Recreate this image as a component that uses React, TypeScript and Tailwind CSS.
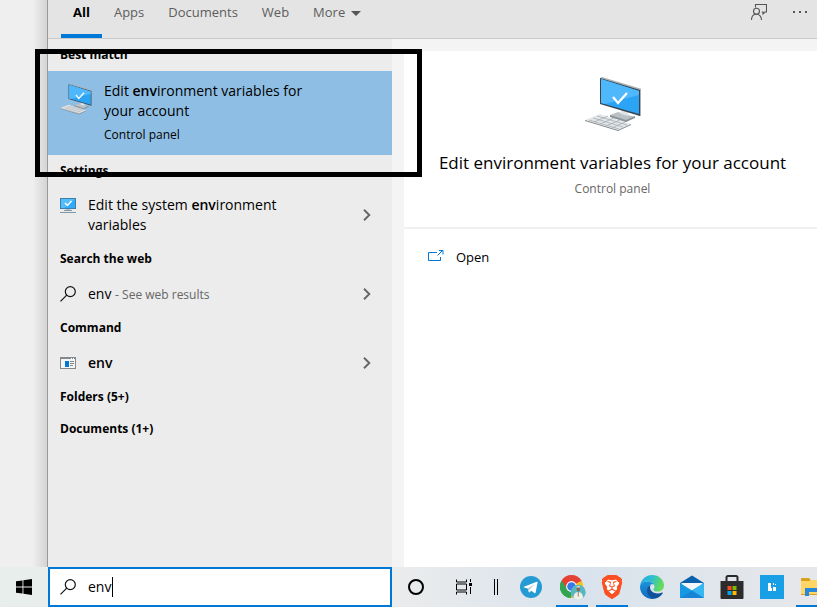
import type { ReactNode } from "react";
import { SiBrave } from "react-icons/si";

function MonitorArt({ className }: { className: string }) {
  return (
    <svg className={className} viewBox="0 0 56 54" aria-hidden="true">
      <path d="M25 38l8-3 17 5-9 5-16-5z" fill="#b9c1c6" />
      <path d="M25 38v2l16 5 9-4v-2l-9 4z" fill="#8a9399" />
      <path d="M36 33l7 2v4l-7-2z" fill="#dfe3e6" />
      <path d="M15 1l2-1 40 12-1 27-2 0z" fill="#aab2b7" />
      <path d="M15 1l40 12v26L15 27z" fill="#36454f" />
      <path d="M16 2l38 12v23L16 26z" fill="#2ba4f5" />
      <path d="M16 2l38 12v4L20 27l-4-1z" fill="#4fb7fb" />
      <path d="M28 20l5 6 9-10" fill="none" stroke="#fff" strokeWidth="2.200" />
      <path d="M0 43l15-6 31 10-13 6z" fill="#e4e7e9" />
      <path d="M0 43v1l33 10 13-6v-1l-13 6z" fill="#81898f" />
      <path d="M4 43l30 9M8 41l30 9M12 39l30 9M9 45l14-6M15 47l14-6M21 49l14-6M27 51l13-6" fill="none" stroke="#a6adb2" strokeWidth="0.800" />
    </svg>
  );
}

function SearchIcon() {
  return (
    <svg className="size-4 shrink-0" viewBox="0 0 16 16" fill="none" stroke="#111" strokeWidth="1.2" aria-hidden="true">
      <circle cx="10.3" cy="5.6" r="5" />
      <path d="M6.7 9.2L.5 15.4" />
    </svg>
  );
}

function SystemIcon() {
  return (
    <svg className="size-4 shrink-0" viewBox="0 0 16 16" aria-hidden="true">
      <path d="M0 0h16v11H0z" fill="#3c7fae" />
      <path d="M1 1h14v9H1z" fill="#2fabf7" />
      <path d="M1 1h14L4 10H1z" fill="#56bdfb" />
      <path d="M5 5l2.500 2.500L11.500 3" fill="none" stroke="#fff" strokeWidth="1.400" />
      <path d="M6 11h4v1H6z" fill="#b5bfc6" />
      <path d="M4 12h8v1H4zM0 14h16v1H0z" fill="#7e98a9" />
    </svg>
  );
}

function CommandIcon() {
  return (
    <svg className="h-3 w-4 shrink-0" viewBox="0 0 16 12" aria-hidden="true">
      <path d="M0 0h16v12H0z" fill="#85898c" />
      <path d="M1 2h14v9H1z" fill="#f3f5f6" />
      <path d="M5 4h4v6H5z" fill="#0078d7" />
      <path d="M10 4h4v1h-4zM10 6h4v1h-4zM10 8h3v1h-3z" fill="#85898c" />
      <path d="M11 1h1v1h-1zM13 1h1v1h-1z" fill="#fff" />
    </svg>
  );
}

function Chevron() {
  return (
    <svg className="h-3 w-2 shrink-0" viewBox="0 0 8 12" fill="none" stroke="#666" strokeWidth="1.900" aria-hidden="true">
      <path d="M1 .8L6.300 6 1 11.200" />
    </svg>
  );
}

function FeedbackIcon() {
  return (
    <svg className="size-4" viewBox="0 0 16 16" fill="none" stroke="#555" strokeWidth="1.100" aria-hidden="true">
      <path d="M4.500 3.500v-3h11v7.500h-1.500l-2 2v-2h-1.200" />
      <circle cx="5.500" cy="7.300" r="3" />
      <path d="M.5 16c0-3.500 2-5.700 5-5.700s5 2.200 5 5.700" />
    </svg>
  );
}

function WindowsIcon() {
  return (
    <svg className="size-4" viewBox="0 0 16 16" aria-hidden="true">
      <path d="M0 2.300L6.500 1.400v6.200H0zM7.400 1.300L16 0v7.600H7.400zM0 8.400h6.500v6.200L0 13.700zM7.400 8.400H16V16l-8.600-1.300z" />
    </svg>
  );
}

function TaskViewIcon() {
  return (
    <svg className="size-4" viewBox="0 0 16 16" aria-hidden="true">
      <path d="M.5 .5v2.500h10V.5M.5 15.500V13h10v2.500M.5 5h10v6H.5z" fill="none" stroke="#000" />
      <path d="M14 0h1v3h-1zM14 8h1v7h-1zM13 4h3v3h-3z" />
    </svg>
  );
}

function TelegramIcon() {
  return (
    <svg className="mr-[2px] size-[22px]" viewBox="0 0 22 22" aria-hidden="true">
      <circle cx="11" cy="11" r="11" fill="#269bd3" />
      <path d="M4 10.800L16.700 5.700c.6-.2 1 .2.9.8l-2 10c-.1.700-.600.900-1.200.500l-3.200-2.300-1.600 1.500c-.4.400-.8.200-.9-.200l-.9-3.500-3.700-1.100c-.6-.2-.6-.4-.1-.6z" fill="#fff" />
      <path d="M7.800 12.500l7.400-4.800-5.800 5.700-.3 2.800z" fill="#a9c9dd" />
    </svg>
  );
}

function ChromeIcon() {
  return (
    <svg className="ml-[2px] h-[26px] w-[26px]" viewBox="0 0 26 26" aria-hidden="true">
      <path d="M11.500 12.500L1.500 6.700A11.500 11.500 0 0 1 21.500 6.700z" fill="#e34133" />
      <path d="M11.500 12.500V24A11.500 11.500 0 0 1 1.500 6.700z" fill="#33a452" />
      <path d="M11.500 12.500l10-5.800A11.500 11.500 0 0 1 11.500 24z" fill="#fbc116" />
      <path d="M11.500 7.300h10.300l-.3-.6H1.500l5.500 8.400z" fill="#e34133" />
      <path d="M1.500 6.700l5.400 8.500 4.600 2.300L9 23.800A11.500 11.500 0 0 1 1.500 6.700z" fill="#33a452" />
      <circle cx="11.500" cy="12.500" r="5.400" fill="#fff" />
      <circle cx="11.500" cy="12.500" r="4.300" fill="#3978e8" />
      <circle cx="18.200" cy="18.200" r="7.500" fill="#56b7c2" />
      <path d="M13.500 24c0-4 2-6 4.700-6s4.800 2 4.800 6a7.500 7.500 0 0 1-9.500 0z" fill="#f0eee6" />
      <path d="M17.800 18h1v4l-.5 1-.5-1z" fill="#9a7b61" />
      <ellipse cx="18.300" cy="15" rx="1.700" ry="2.400" fill="#8c6550" />
      <path d="M16.500 13.500c.5-2 3.200-2 3.700 0z" fill="#e7e3da" />
    </svg>
  );
}

function BraveIcon() {
  return (
    <svg className="h-6 w-6" viewBox="0 0 24 24" aria-hidden="true">
      <path d="M2.800 3.500L7 .3h10l4.200 3.200.6 3.500L19 18.500 12 23.700 5 18.500 2.200 7z" fill="#fb5023" />
      <path d="M8 4.500l4 .8 4-.8 3.300 3.500-1.300 3.500.3 2.500-3.300 3-3 2.800-3-2.800-3.300-3 .3-2.500L4.700 8z" fill="#fff" />
      <SiBrave size={24} color="#fb5023" />
    </svg>
  );
}

function EdgeIcon() {
  return (
    <svg className="size-6" viewBox="0 0 24 24" aria-hidden="true">
      <defs>
        <linearGradient id="edge-top" x1="0" y1="0" x2="1" y2="0.3">
          <stop offset="0" stopColor="#2aa7e6" />
          <stop offset="0.5" stopColor="#2dbfd0" />
          <stop offset="1" stopColor="#66dc59" />
        </linearGradient>
        <linearGradient id="edge-side" x1="0" y1="0" x2="0" y2="1">
          <stop offset="0" stopColor="#1b92dd" />
          <stop offset="1" stopColor="#116bbd" />
        </linearGradient>
      </defs>
      <path d="M.2 10.500C1 4.200 6 0 12 0c7 0 12 5 12 10.300 0 4-3 6.300-6.300 6.300-3 0-4.400-1-4.400-1.800 0-.7 1.200-1.200 1.200-3 0-2.300-2.600-5.300-6.900-5.300C4 6.500 1.500 8.300.2 10.500z" fill="url(#edge-top)" />
      <path d="M.2 10.500C1.300 8 4.100 6.500 7.600 6.500c3 0 5.200 1.400 6.200 3-2.800-.8-6.300 1.300-6.300 5.300 0 4.500 3.700 8.500 8 8.600C13.200 24.400 10.300 24 9 23.600 3.500 22 0 17.200 0 12z" fill="url(#edge-side)" />
      <path d="M11.500 9.400c-3.400 1-4.700 3.800-4.500 6.500.4 4.300 4 7.900 8.500 7.500 3.400-.7 5.700-2.900 7.200-5.200.3-.6-.2-.9-.7-.7-5.500 2.400-12-.1-12-5.500 0-1 .6-2.100 1.500-2.600z" fill="#10529b" />
    </svg>
  );
}

function MailIcon() {
  return (
    <svg className="size-6" viewBox="0 0 24 24" aria-hidden="true">
      <path d="M0 8L12 .5 24 8v6H0z" fill="#0961ac" />
      <path d="M1.500 8h21v7h-21z" fill="#f3f7fa" />
      <path d="M0 8l12 7.500L24 8v15H0z" fill="#1599e3" />
      <path d="M0 23l15-9 9 9z" fill="#1784d5" />
      <path d="M0 8l24 15V8l-12 7.500z" fill="#35b7f1" />
    </svg>
  );
}

function StoreIcon() {
  return (
    <svg className="size-6" viewBox="0 0 24 24" aria-hidden="true">
      <path d="M6.500 7V2.500C6.500 1.500 7 1 8 1h8c1 0 1.500.5 1.500 1.500V7" fill="none" stroke="#292929" strokeWidth="2" />
      <path d="M.5 6h23v17c0 .6-.4 1-1 1h-21c-.6 0-1-.4-1-1z" fill="#2c2c2c" />
      <path d="M7.500 11h4v4h-4z" fill="#f25022" />
      <path d="M12.500 11h4v4h-4z" fill="#7fba00" />
      <path d="M7.500 16h4v4h-4z" fill="#00a4ef" />
      <path d="M12.500 16h4v4h-4z" fill="#ffb900" />
    </svg>
  );
}

function LauncherIcon() {
  return (
    <svg className="size-6" viewBox="0 0 24 24" aria-hidden="true">
      <path d="M0 0h24v24H0z" fill="#199fe6" />
      <path d="M8 8h3v5h1v3H8zM13 12h3v4h-3zM13 8h1v2h-1zM15 9h1v1h-1z" fill="#fff" />
    </svg>
  );
}

function FolderIcon() {
  return (
    <svg className="ml-[2px] h-6 w-6 shrink-0" viewBox="0 0 24 24" aria-hidden="true">
      <path d="M0 4c0-.6.400-1 1-1h7l2 2.500h13c.6 0 1 .400 1 1V20H0z" fill="#d9a11e" />
      <path d="M0 6h8l2-1h13c.6 0 1 .400 1 1v13H0z" fill="#ffd666" />
      <path d="M4 13h16v8h-4v-4H8v4H4z" fill="#2688dc" />
    </svg>
  );
}

function TabButton({ children, active = false }: { children: ReactNode; active?: boolean }) {
  return (
    <button
      className={
        active
          ? "flex h-full items-center border-b-4 border-[#0078d7] px-3 pb-2 font-bold text-black"
          : "flex h-full items-center gap-[6px] px-3 pb-3 text-[#5d5d5d]"
      }
    >
      {children}
    </button>
  );
}

function GroupHeading({ children }: { children: ReactNode }) {
  return <h2 className="flex h-8 items-center px-3 text-xs font-bold">{children}</h2>;
}

function ResultRow({ icon, tall = false, children }: { icon: ReactNode; tall?: boolean; children: ReactNode }) {
  return (
    <button className={tall ? "flex h-14 w-full items-center px-3 text-left" : "flex h-[37px] w-full items-center px-3 text-left"}>
      <span className={tall ? "mr-3 self-start pt-[11px]" : "mr-3"}>{icon}</span>
      <span className="w-[210px] text-sm leading-5">{children}</span>
      <span className="mr-[9px] ml-auto">
        <Chevron />
      </span>
    </button>
  );
}

function TaskButton({ label, running = false, children }: { label: string; running?: boolean; children: ReactNode }) {
  return (
    <button aria-label={label} className="flex w-10 shrink-0 flex-col items-center">
      <span className="flex h-[38px] items-center pt-[2px]">{children}</span>
      <span className={running ? "h-[2px] w-8 bg-[#0078d7]" : "h-[2px] w-8"} />
    </button>
  );
}

export default function App() {
  return (
    <div className="relative flex min-h-screen flex-col overflow-hidden bg-[#eee] font-['Open_Sans','Noto_Sans',sans-serif] text-black">
      <div className="flex grow">
        <div className="w-12 shrink-0 border-r border-[#999] bg-linear-to-r from-[#efefef] from-70% to-[#d4d4d4]" />
        <main className="flex min-w-0 grow flex-col bg-[#f4f4f4]">
          <header className="flex h-[39px] justify-between border-b border-[#cacaca] bg-[#e4e4e4]">
            <nav className="flex pl-[13px] text-[13px]">
              <TabButton active>All</TabButton>
              <TabButton>Apps</TabButton>
              <TabButton>Documents</TabButton>
              <TabButton>Web</TabButton>
              <TabButton>
                More
                <svg className="h-[5px] w-[10px]" viewBox="0 0 10 5" fill="#555" aria-hidden="true">
                  <path d="M0 0h10L5 5z" />
                </svg>
              </TabButton>
            </nav>
            <div className="flex items-center gap-[26px] pr-[10px] pb-[14px]">
              <button aria-label="Feedback">
                <FeedbackIcon />
              </button>
              <button aria-label="Options" className="flex gap-1">
                <span className="size-[2px] bg-[#555]" />
                <span className="size-[2px] bg-[#555]" />
                <span className="size-[2px] bg-[#555]" />
              </button>
            </div>
          </header>
          <div className="flex grow">
            <section className="w-[344px] shrink-0 bg-[#ececec]">
              <GroupHeading>Best match</GroupHeading>
              <button className="flex h-[84px] w-full bg-[#8fbee4] px-3 pt-[10px] text-left">
                <MonitorArt className="mt-[2px] mr-3 h-8 w-8 shrink-0" />
                <span className="flex w-[210px] flex-col">
                  <span className="text-sm leading-5">
                    Edit <b className="font-semibold">env</b>ironment variables for your account
                  </span>
                  <span className="mt-1 text-xs leading-5">Control panel</span>
                </span>
              </button>
              <GroupHeading>Settings</GroupHeading>
              <ResultRow icon={<SystemIcon />} tall>
                Edit the system <b className="font-semibold">env</b>ironment variables
              </ResultRow>
              <GroupHeading>Search the web</GroupHeading>
              <ResultRow icon={<SearchIcon />}>
                env <span className="text-xs text-[#666]">- See web results</span>
              </ResultRow>
              <GroupHeading>Command</GroupHeading>
              <ResultRow icon={<CommandIcon />}>
                <b className="font-semibold">env</b>
              </ResultRow>
              <GroupHeading>Folders (5+)</GroupHeading>
              <GroupHeading>Documents (1+)</GroupHeading>
            </section>
            <section className="mt-3 ml-3 min-w-0 grow bg-white">
              <div className="flex h-[178px] flex-col items-center border-b-2 border-[#f0f0f0] pt-[26px] pl-1">
                <MonitorArt className="h-[54px] w-14" />
                <h1 className="mt-5 text-[17px] leading-6 whitespace-nowrap">Edit environment variables for your account</h1>
                <p className="mt-1 text-xs leading-5 text-[#666]">Control panel</p>
              </div>
              <button className="flex items-center gap-3 px-6 pt-[18px] text-[13px] leading-5">
                <svg className="h-4 w-4" viewBox="0 0 16 16" fill="none" stroke="#0078d7" aria-hidden="true">
                  <path d="M9 3.500H.5v8h12V8M9.500 6.500l5-5M11 1.500h4v4" />
                </svg>
                Open
              </button>
            </section>
          </div>
        </main>
      </div>
      <footer className="flex h-10 bg-linear-to-r from-[#e8eeec] via-[#ececec] to-[#e6e8ea]">
        <button aria-label="Start" className="flex w-12 shrink-0 items-center justify-center">
          <WindowsIcon />
        </button>
        <label className="flex w-[344px] shrink-0 items-center gap-3 border-2 border-[#0078d7] bg-white px-[10px]">
          <SearchIcon />
          <span className="relative flex min-w-0 grow items-center">
            <input aria-label="Search" defaultValue="env" className="h-7 w-full bg-transparent text-sm leading-7 outline-none" />
            <span className="absolute left-6 h-5 w-px bg-black" />
          </span>
        </label>
        <div className="flex min-w-0 grow overflow-hidden bg-linear-to-r from-[#ebecec] via-[#d9e3ed] via-45% to-[#e6e7e9]">
          <button aria-label="Cortana" className="flex w-12 shrink-0 items-center justify-center">
            <span className="size-4 rounded-full border-2 border-black" />
          </button>
          <button aria-label="Task view" className="flex w-12 shrink-0 items-center justify-center">
            <TaskViewIcon />
          </button>
          <span className="mr-2 flex w-4 shrink-0 items-center justify-center">
            <span className="h-4 w-1 border-x border-black" />
          </span>
          <TaskButton label="Telegram"><TelegramIcon /></TaskButton>
          <TaskButton label="Chrome" running><ChromeIcon /></TaskButton>
          <TaskButton label="Brave" running><BraveIcon /></TaskButton>
          <TaskButton label="Edge"><EdgeIcon /></TaskButton>
          <TaskButton label="Mail"><MailIcon /></TaskButton>
          <TaskButton label="Store"><StoreIcon /></TaskButton>
          <TaskButton label="Launcher"><LauncherIcon /></TaskButton>
          <TaskButton label="Files" running><FolderIcon /></TaskButton>
        </div>
      </footer>
      <div className="pointer-events-none absolute top-[49px] left-[35px] h-32 w-[387px] border-5 border-black" />
    </div>
  );
}
